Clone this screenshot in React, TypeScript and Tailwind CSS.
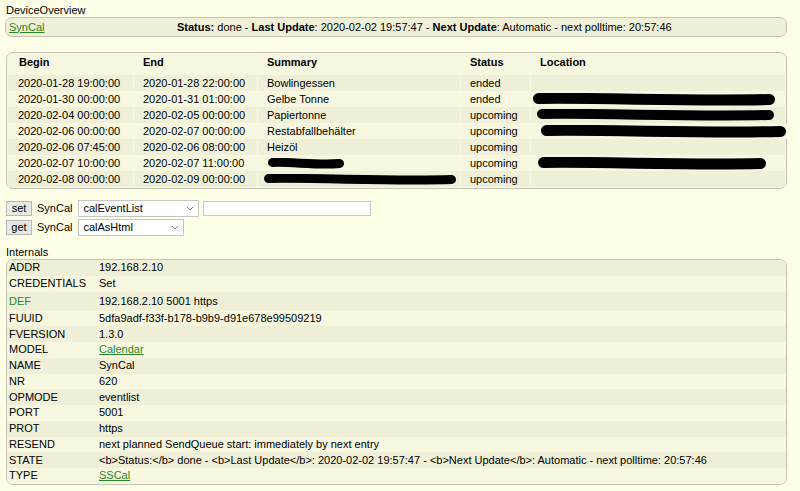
import React from "react";

const Blob = ({ w, h, className = "" }: { w: number; h: number; className?: string }) => {
  const r = h / 2;
  return (
    <svg width={w} height={h} viewBox={`0 0 ${w} ${h}`} className={`inline-block align-middle shrink-0 ${className}`}>
      <path
        d={`M ${r} ${r - 1} C ${w * 0.3} ${r - 2}, ${w * 0.65} ${r + 2}, ${w - r} ${r}`}
        stroke="black"
        strokeWidth={h - 2}
        strokeLinecap="round"
        fill="none"
      />
    </svg>
  );
};

const events: { b: string; e: string; s: React.ReactNode; st: string; loc: React.ReactNode }[] = [
  { b: "2020-01-28 19:00:00", e: "2020-01-28 22:00:00", s: "Bowlingessen", st: "ended", loc: "" },
  { b: "2020-01-30 00:00:00", e: "2020-01-31 01:00:00", s: "Gelbe Tonne", st: "ended", loc: <Blob w={244} h={13} className="-ml-[8px]" /> },
  { b: "2020-02-04 00:00:00", e: "2020-02-05 00:00:00", s: "Papiertonne", st: "upcoming", loc: <Blob w={239} h={12} className="-ml-[4px]" /> },
  { b: "2020-02-06 00:00:00", e: "2020-02-07 00:00:00", s: "Restabfallbehälter", st: "upcoming", loc: <Blob w={247} h={13} /> },
  { b: "2020-02-06 07:45:00", e: "2020-02-06 08:00:00", s: "Heizöl", st: "upcoming", loc: "" },
  { b: "2020-02-07 10:00:00", e: "2020-02-07 11:00:00", s: <Blob w={78} h={11} />, st: "upcoming", loc: <Blob w={230} h={13} className="-ml-[3px]" /> },
  { b: "2020-02-08 00:00:00", e: "2020-02-09 00:00:00", s: <Blob w={194} h={11} className="-ml-[4px]" />, st: "upcoming", loc: "" },
];

const internals: { k: string; v: React.ReactNode; green?: boolean; tall?: boolean }[] = [
  { k: "ADDR", v: "192.168.2.10" },
  { k: "CREDENTIALS", v: "Set" },
  { k: "DEF", v: "192.168.2.10 5001 https", green: true, tall: true },
  { k: "FUUID", v: "5dfa9adf-f33f-b178-b9b9-d91e678e99509219" },
  { k: "FVERSION", v: "1.3.0" },
  { k: "MODEL", v: <span className="text-[#278727] underline">Calendar</span> },
  { k: "NAME", v: "SynCal" },
  { k: "NR", v: "620" },
  { k: "OPMODE", v: "eventlist" },
  { k: "PORT", v: "5001" },
  { k: "PROT", v: "https" },
  { k: "RESEND", v: "next planned SendQueue start: immediately by next entry" },
  {
    k: "STATE",
    v: "<b>Status:</b> done - <b>Last Update</b>: 2020-02-02 19:57:47 - <b>Next Update</b>: Automatic - next polltime: 20:57:46",
  },
  { k: "TYPE", v: <span className="text-[#278727] underline">SSCal</span> },
];

const Chevron = () => (
  <svg width="8" height="5" viewBox="0 0 8 5" className="shrink-0">
    <path d="M1 1 L4 4 L7 1" stroke="#888" strokeWidth="1" fill="none" />
  </svg>
);

const cols = "grid grid-cols-[125px_123px_202px_69px_1fr] gap-x-[1px]";

export default function App() {
  return (
    <div
      className="w-[800px] h-[491px] overflow-hidden bg-[#FFFFE7] text-black text-[11px] leading-none"
      style={{ fontFamily: '"Liberation Sans", Arial, sans-serif' }}
    >
      <div className="pl-[6px] pt-[4px] h-[17px] flex items-center">DeviceOverview</div>

      {/* header block */}
      <div className="ml-[5px] mr-[13px] h-[20px] rounded-[7px] border border-[#c4c4b4] bg-[#F0F0D8] flex items-center">
        <div className="w-[171px] pl-[3px]">
          <span className="text-[#278727] underline">SynCal</span>
        </div>
        <div>
          <b>Status:</b> done - <b>Last Update</b>: 2020-02-02 19:57:47 - <b>Next Update</b>: Automatic - next polltime: 20:57:46
        </div>
      </div>

      {/* events block */}
      <div className="ml-[6px] mr-[13px] mt-[15px] rounded-[7px] border border-[#c4c4b4] bg-[#F8F8E0] pl-[1px] pr-[1px] pb-[1px]">
        <div className={`${cols} h-[19px] items-center font-bold`}>
          <div className="pl-[11px]">Begin</div>
          <div className="pl-[9px]">End</div>
          <div className="pl-[9px]">Summary</div>
          <div className="pl-[9px]">Status</div>
          <div className="pl-[9px]">Location</div>
        </div>
        <div className="h-[3px]" />
        {events.map((r, i) => (
          <div key={i} className={`${cols} h-[16px]`}>
            {[r.b, r.e, r.s, r.st, r.loc].map((c, j) => (
              <div
                key={j}
                className={`${i % 2 === 0 ? "bg-[#F0F0D8]" : "bg-[#F8F8E0]"} flex items-center whitespace-nowrap ${
                  j === 0 ? "pl-[10px]" : "pl-[9px]"
                }`}
              >
                {c}
              </div>
            ))}
          </div>
        ))}
      </div>

      {/* set/get */}
      <div className="mt-[11px] ml-[6px] flex flex-col gap-[2px]">
        <div className="flex items-center h-[17px]">
          <div className="w-[26px] h-[15px] bg-[#E9E9E4] border border-[#b8b8b8] flex items-center justify-center">set</div>
          <span className="ml-[5px]">SynCal</span>
          <div className="ml-[6px] w-[121px] h-[17px] bg-white border border-[#c6c6c6] flex items-center justify-between pl-[4px] pr-[4px]">
            <span>calEventList</span>
            <Chevron />
          </div>
          <div className="ml-[4px] w-[168px] h-[15px] bg-white border border-[#c6c6c6]" />
        </div>
        <div className="flex items-center h-[17px]">
          <div className="w-[26px] h-[15px] bg-[#E9E9E4] border border-[#b8b8b8] flex items-center justify-center">get</div>
          <span className="ml-[5px]">SynCal</span>
          <div className="ml-[6px] w-[106px] h-[17px] bg-white border border-[#c6c6c6] flex items-center justify-between pl-[4px] pr-[4px]">
            <span>calAsHtml</span>
            <Chevron />
          </div>
        </div>
      </div>

      <div className="mt-[10px] ml-[6px] h-[12px] flex items-center">Internals</div>

      <div className="ml-[6px] mr-[13px] mt-[1px] rounded-[7px] border border-[#c4c4b4] bg-[#F8F8E0] overflow-hidden">
        {internals.map((r, i) => (
          <div
            key={r.k}
            className={`flex items-center ${r.tall ? "h-[19px]" : "h-[15.75px]"} ${
              i % 2 === 0 ? "bg-[#F0F0D8]" : "bg-[#F8F8E0]"
            }`}
          >
            <div className={`w-[92px] pl-[2px] ${r.green ? "text-[#278727]" : ""}`}>{r.k}</div>
            <div className="whitespace-nowrap">{r.v}</div>
          </div>
        ))}
      </div>
    </div>
  );
}
